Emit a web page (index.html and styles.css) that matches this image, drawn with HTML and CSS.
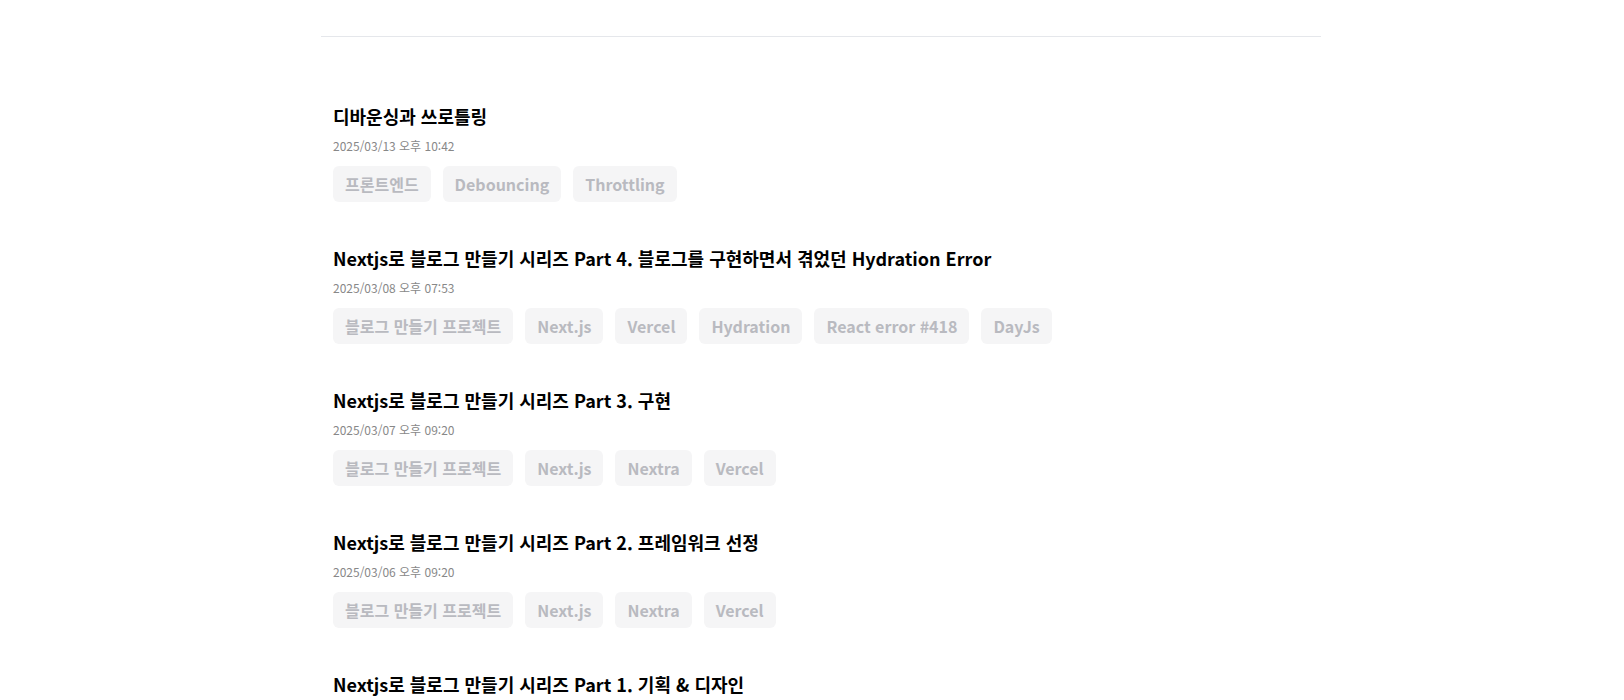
FILE: index.html
```html
<!DOCTYPE html>
<html lang="ko">

<head>
    <meta charset="UTF-8">
    <title>블로그</title>
    <link rel="stylesheet" href="styles.css">
</head>

<body>
<div class="wrap">
    <header class="top"></header>
    <ul class="post-list">
        <li class="post">
            <h2 class="post-title">디바운싱과 쓰로틀링</h2>
            <p class="post-date">2025/03/13 오후 10:42</p>
            <div class="tags">
                <span class="tag">프론트엔드</span>
                <span class="tag">Debouncing</span>
                <span class="tag">Throttling</span>
            </div>
        </li>
        <li class="post">
            <h2 class="post-title">Nextjs로 블로그 만들기 시리즈 Part 4. 블로그를 구현하면서 겪었던 Hydration Error</h2>
            <p class="post-date">2025/03/08 오후 07:53</p>
            <div class="tags">
                <span class="tag">블로그 만들기 프로젝트</span>
                <span class="tag">Next.js</span>
                <span class="tag">Vercel</span>
                <span class="tag">Hydration</span>
                <span class="tag">React error #418</span>
                <span class="tag">DayJs</span>
            </div>
        </li>
        <li class="post">
            <h2 class="post-title">Nextjs로 블로그 만들기 시리즈 Part 3. 구현</h2>
            <p class="post-date">2025/03/07 오후 09:20</p>
            <div class="tags">
                <span class="tag">블로그 만들기 프로젝트</span>
                <span class="tag">Next.js</span>
                <span class="tag">Nextra</span>
                <span class="tag">Vercel</span>
            </div>
        </li>
        <li class="post">
            <h2 class="post-title">Nextjs로 블로그 만들기 시리즈 Part 2. 프레임워크 선정</h2>
            <p class="post-date">2025/03/06 오후 09:20</p>
            <div class="tags">
                <span class="tag">블로그 만들기 프로젝트</span>
                <span class="tag">Next.js</span>
                <span class="tag">Nextra</span>
                <span class="tag">Vercel</span>
            </div>
        </li>
        <li class="post">
            <h2 class="post-title">Nextjs로 블로그 만들기 시리즈 Part 1. 기획 &amp; 디자인</h2>
            <p class="post-date">2025/03/05 오후 09:20</p>
            <div class="tags">
                <span class="tag">블로그 만들기 프로젝트</span>
                <span class="tag">Next.js</span>
                <span class="tag">Nextra</span>
                <span class="tag">Vercel</span>
            </div>
        </li>
    </ul>
</div>
</body>

</html>
```

FILE: styles.css
```css
html,
body {
    margin: 0;
    font-family: "Noto Sans CJK KR", "Noto Sans", sans-serif;
    color: #000;
    background: #fff;
}

body {
    padding-left: 18px;
}

.wrap {
    width: 1000px;
    margin: 0 auto;
}

.top {
    height: 36px;
    border-bottom: 1px solid #e5e7eb;
}

.post-list {
    list-style: none;
    margin: 0;
    padding: 66px 12px 0;
}

.post {
    margin-bottom: 43px;
}

.post-title {
    margin: 0;
    font-size: 18px;
    font-weight: 700;
    line-height: 26px;
}

.post-date {
    margin: 7px 0 0;
    font-size: 12px;
    line-height: 20px;
    color: #888;
}

.tags {
    display: flex;
    flex-wrap: wrap;
    gap: 12px;
    margin-top: 10px;
}

.tag {
    height: 36px;
    padding: 0 12px;
    border-radius: 6px;
    background: #f5f5f6;
    color: #b9bac0;
    font-size: 16px;
    font-weight: 700;
    line-height: 36px;
}
```
